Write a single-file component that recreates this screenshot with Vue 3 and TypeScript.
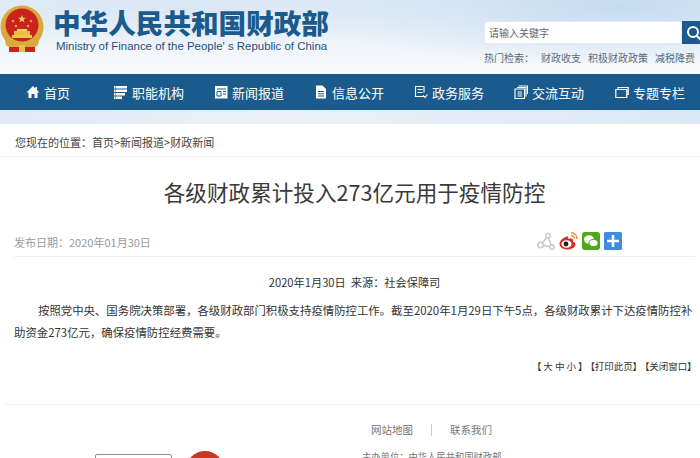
<script setup lang="ts">
interface NavItem { label: string; icon: string }
const navItems: NavItem[] = [
  { label: '首页', icon: 'home' },
  { label: '职能机构', icon: 'org' },
  { label: '新闻报道', icon: 'news' },
  { label: '信息公开', icon: 'doc' },
  { label: '政务服务', icon: 'service' },
  { label: '交流互动', icon: 'talk' },
  { label: '专题专栏', icon: 'topic' },
]
const hotLinks: string[] = ['财政收支', '积极财政政策', '减税降费']
const stars: [number, number, number][] = [
  [22, 14, 4.2], [13, 16, 1.8], [16, 21, 1.8], [28, 21, 1.8], [31, 16, 1.8],
]
function starPoints(cx: number, cy: number, r: number): string {
  const pts: string[] = []
  for (let i = 0; i < 10; i++) {
    const rad = i % 2 === 0 ? r : r * 0.4
    const a = -Math.PI / 2 + (i * Math.PI) / 5
    pts.push(`${(cx + rad * Math.cos(a)).toFixed(2)},${(cy + rad * Math.sin(a)).toFixed(2)}`)
  }
  return pts.join(' ')
}
</script>

<template>
  <div class="page">
    <header class="top">
      <svg class="emblem" width="44" height="48" viewBox="0 0 44 48">
        <circle cx="22" cy="22" r="21.5" fill="#d9a93c" />
        <circle cx="22" cy="20" r="16.5" fill="#c8231d" />
        <polygon v-for="(s, i) in stars" :key="i" :points="starPoints(s[0], s[1], s[2])" fill="#f4d25a" />
        <path d="M12 30h20v3H12z" fill="#f0c64e" />
        <path d="M14 26h16v4H14z" fill="#e9bd47" />
        <path d="M17 24h10v2H17z" fill="#f4d25a" />
        <path d="M4 31c4 7 10 9 18 9s14-2 18-9l-2 9-4 3H10l-4-3z" fill="#d9a93c" />
        <path d="M9 42h26v5H9z" fill="#c8231d" />
        <path d="M19 40h6v7h-6z" fill="#e8bd4a" />
      </svg>
      <div class="brand">
        <div class="brand-cn">中华人民共和国财政部</div>
        <div class="brand-en">Ministry of Finance of the People' s Republic of China</div>
      </div>
      <div class="tools">
        <div class="search">
          <div class="search-input">请输入关键字</div>
          <div class="search-btn">
            <svg width="30" height="23" viewBox="0 0 30 23">
              <circle cx="11" cy="11" r="5" fill="none" stroke="#fff" stroke-width="2" />
              <path d="M15 15l4 4" stroke="#fff" stroke-width="2" />
            </svg>
          </div>
        </div>
        <div class="hot">
          <span class="hot-label">热门检索：</span>
          <span v-for="h in hotLinks" :key="h" class="hot-link">{{ h }}</span>
        </div>
      </div>
    </header>

    <nav class="nav">
      <a v-for="item in navItems" :key="item.label" class="nav-item">
        <svg width="14" height="14" viewBox="0 0 14 14" class="nav-icon">
          <path v-if="item.icon === 'home'" d="M7 1L0.500 7.500h2V13h3V9h3v4h3V7.500h2L11 5V2H9.500v1.500z" fill="#fff" />
          <g v-else-if="item.icon === 'org'" fill="#fff">
            <path d="M2 1h11v2.500H2zM0 1h1.500v2.500H0zM0 4.500h1.500V7H0zM0 8h1.500v2.500H0zM0 11.500h1.500V14H0z" />
            <path d="M2 4.500h11V7H2zM2 8h9v2.500H2zM2 11.500h6V14H2z" />
          </g>
          <g v-else-if="item.icon === 'news'">
            <path d="M1 1h12.500v12.500H1z" fill="#fff" />
            <path d="M3 4h9M3 6.500h4v4.500H3zM9 6.500h3M9 9h3" stroke="#1b5a8c" fill="none" />
          </g>
          <g v-else-if="item.icon === 'doc'">
            <path d="M2 0.500h6.500L12 4v9.500H2z" fill="#fff" />
            <path d="M4 6.500h6M4 8.800h6M4 11h6" stroke="#1b5a8c" />
          </g>
          <g v-else-if="item.icon === 'service'" fill="none" stroke="#fff" stroke-width="1.100">
            <path d="M9.500 11.500H1.500V1.500h8.500v6M3.500 4.500h5M3.500 7.500h5M9 10.500l2 2 2.500-3" />
          </g>
          <g v-else-if="item.icon === 'talk'" fill="none" stroke="#fff" stroke-width="1.100">
            <path d="M1 4h9.500v9.500H1zM3 2.500h9v9M4.500 1h9v8" />
            <path d="M3.500 7h4.500M3.500 9h4.500M3.500 11h4.500" />
          </g>
          <g v-else fill="none" stroke="#fff" stroke-width="1.200">
            <path d="M0.800 4.500h11v8H0.800zM3 4.500V2.500h10.200v7h-1.400" />
          </g>
        </svg>
        <span>{{ item.label }}</span>
      </a>
    </nav>
    <div class="band"></div>

    <div class="crumb">您现在的位置：首页&gt;新闻报道&gt;财政新闻</div>

    <main class="article">
      <h1 class="title">各级财政累计投入273亿元用于疫情防控</h1>
      <div class="meta">
        <span class="date">发布日期：2020年01月30日</span>
        <div class="share">
          <svg width="18" height="18" viewBox="0 0 18 18" fill="none" stroke="#c8c8c8" stroke-width="1.400">
            <circle cx="11" cy="3.500" r="2.400" />
            <circle cx="3.500" cy="13" r="2.800" />
            <circle cx="15" cy="15" r="2.200" />
            <path d="M9.800 5.800L5.300 10.800M11.500 6l2.800 7M6.300 13.500l6.500 1" />
          </svg>
          <svg width="19" height="18" viewBox="0 0 19 18">
            <path d="M8 4.500C4 5.500 0.500 9 0.500 12c0 3.300 4 5.500 8 5.500 4.500 0 8-2.500 8-5 0-2-2-2.500-2.500-3 .5-1.500 0-3-2-3-1.500 0-2 .5-2.500.5S10 4 8 4.500z" fill="#dc2a24" />
            <ellipse cx="7.500" cy="12" rx="5" ry="3.800" fill="#fff" />
            <circle cx="7" cy="12" r="2.400" fill="#222" />
            <path d="M12 0.800c3.500 0 6 2.700 6 6.200M12 3.500c2 0 3.300 1.500 3.300 3.300" fill="none" stroke="#e79a35" stroke-width="1.500" />
          </svg>
          <svg width="18" height="18" viewBox="0 0 18 18">
            <rect width="18" height="18" rx="3" fill="#4fa81c" />
            <ellipse cx="7" cy="7.500" rx="5" ry="4.200" fill="#fff" />
            <ellipse cx="11.500" cy="11" rx="4.500" ry="3.600" fill="#fff" stroke="#4fa81c" />
          </svg>
          <svg width="18" height="18" viewBox="0 0 18 18">
            <rect width="18" height="18" rx="1.500" fill="#3f8de0" />
            <path d="M9 3v12M3 9h12" stroke="#fff" stroke-width="2.600" />
          </svg>
        </div>
      </div>
      <p class="source">2020年1月30日&nbsp;&nbsp;来源：社会保障司</p>
      <p class="body">按照党中央、国务院决策部署，各级财政部门积极支持疫情防控工作。截至2020年1月29日下午5点，各级财政累计下达疫情防控补助资金273亿元，确保疫情防控经费需要。</p>
      <div class="actions">
        <span class="size">【 大 中 小 】</span>
        <span>【打印此页】</span>
        <span>【关闭窗口】</span>
      </div>
    </main>

    <footer class="footer">
      <div class="foot-badges">
        <div class="foot-box"></div>
        <div class="foot-emblem"></div>
      </div>
      <div class="foot-center">
        <div class="foot-links">
          <span>网站地图</span>
          <i class="foot-sep"></i>
          <span>联系我们</span>
        </div>
        <div class="foot-org">主办单位：中华人民共和国财政部</div>
      </div>
    </footer>
  </div>
</template>

<style scoped>
.page {
  width: 700px;
  height: 458px;
  overflow: hidden;
  background: #fff;
  color: #333;
  font-family: "Noto Sans CJK SC", "Liberation Sans", sans-serif;
  font-size: 12px;
}
.top {
  height: 74px;
  display: flex;
  background:
    radial-gradient(ellipse 330px 60px at 620px 6px, #c4dcf2 0%, rgba(196, 220, 242, 0) 100%),
    radial-gradient(ellipse 300px 50px at 180px 0px, #d8e6f3 0%, rgba(216, 230, 243, 0) 100%),
    linear-gradient(180deg, #e4edf6 0%, #f7fafd 100%);
}
.emblem { margin: 5px 9px 0 0; flex: none; }
.brand { width: 304px; flex: none; padding-top: 7px; }
.brand-cn {
  font-size: 27.600px;
  line-height: 30px;
  font-weight: 900;
  color: #1b5a8c;
  white-space: nowrap;
}
.brand-en {
  margin: 2px 0 0 3px;
  font-family: "Liberation Sans", sans-serif;
  font-size: 11.450px;
  line-height: 14px;
  color: #1f4f7c;
  white-space: nowrap;
}
.tools { flex: none; width: 260px; margin-left: 127px; padding-top: 21px; }
.search { display: flex; height: 23px; }
.search-input {
  width: 198px;
  box-sizing: border-box;
  padding-left: 4px;
  background: #fff;
  border: 1px solid #e3e9f0;
  color: #666;
  font-size: 10px;
  line-height: 21px;
}
.search-btn { width: 30px; height: 23px; background: #1b5a8c; flex: none; }
.hot {
  display: flex;
  margin-top: 6px;
  color: #5c6b78;
  font-size: 10px;
  line-height: 15px;
  white-space: nowrap;
}
.hot-label { width: 57px; }
.hot-link { margin-right: 7px; }
.nav {
  height: 36px;
  display: flex;
  align-items: center;
  gap: 30px;
  padding-left: 26px;
  background: #1b5a8c;
  color: #fff;
  font-size: 13px;
  white-space: nowrap;
}
.nav-item { display: flex; align-items: center; gap: 4px; }
.nav-item:first-child { margin-right: 14px; }
.nav-item:last-child { margin-left: 1px; }
.nav-icon { flex: none; }
.band {
  height: 14px;
  background: linear-gradient(90deg, #dfeaf5 0%, #eaf1f8 40%, #dbe8f5 100%);
}
.crumb {
  height: 33px;
  box-sizing: border-box;
  padding-left: 15px;
  border-bottom: 1px solid #f0f0f0;
  line-height: 37px;
  color: #444;
  font-size: 11px;
}
.article { margin: 0 5px 0 14px; }
.title {
  margin: 0;
  padding-top: 20px;
  text-align: center;
  font-size: 21.600px;
  line-height: 30px;
  font-weight: 400;
  color: #3a3a3a;
}
.meta {
  height: 50px;
  padding-top: 21px;
  box-sizing: border-box;
  display: flex;
  align-items: center;
  justify-content: space-between;
  border-bottom: 1px solid #f0f0f0;
}
.date { color: #9a9a9a; font-size: 11px; }
.share {
  display: flex;
  gap: 4px;
  margin-right: 73px;
  margin-bottom: 2px;
}
.source {
  margin: 16px 0 0;
  text-align: center;
  font-size: 11.200px;
  line-height: 18px;
}
.body {
  margin: 8px 0 0;
  text-indent: 24px;
  font-size: 11.400px;
  line-height: 22px;
  color: #333;
}
.actions {
  display: flex;
  justify-content: flex-end;
  gap: 7px;
  margin-top: 16px;
  padding-right: 3px;
  font-size: 9.500px;
  line-height: 14px;
  color: #333;
  font-feature-settings: "palt";
}
.size { font-size: 9.500px; }
.footer {
  margin: 31px 0 0 5px;
  border-top: 1px solid #eee;
  display: flex;
}
.foot-badges { display: flex; gap: 14px; padding: 46px 0 0 90px; width: 267px; box-sizing: border-box; flex: none; }
.foot-box {
  width: 77px;
  height: 20px;
  margin-top: 3px;
  flex: none;
  border: 1px solid #7f93a8;
  border-radius: 2px;
  box-sizing: border-box;
}
.foot-emblem { width: 38px; height: 38px; flex: none; border-radius: 50%; background: #c5371f; }
.foot-center { color: #777; padding-top: 16px; }
.foot-links {
  display: flex;
  align-items: center;
  gap: 18px;
  margin-left: 99px;
  line-height: 18px;
  font-size: 10.500px;
}
.foot-sep { width: 1px; height: 12px; background: #ccc; }
.foot-org { margin: 10px 0 0 90px; font-size: 9.300px; line-height: 15px; white-space: nowrap; }
</style>
